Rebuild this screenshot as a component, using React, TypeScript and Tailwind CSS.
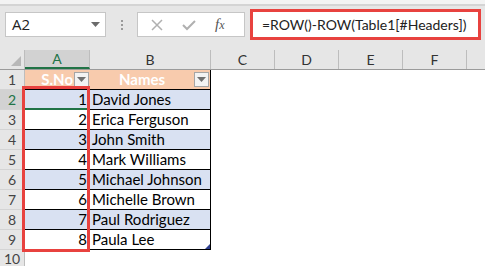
import React from 'react'

const rows = [
  { n: 1, name: 'David Jones' },
  { n: 2, name: 'Erica Ferguson' },
  { n: 3, name: 'John Smith' },
  { n: 4, name: 'Mark Williams' },
  { n: 5, name: 'Michael Johnson' },
  { n: 6, name: 'Michelle Brown' },
  { n: 7, name: 'Paul Rodriguez' },
  { n: 8, name: 'Paula Lee' },
]

const cellFont = { fontFamily: 'Lato, "Liberation Sans", sans-serif' }

function FilterButton() {
  return (
    <div className="w-[15px] h-[15px] border border-[#a6a6a6] bg-[#f3f3f3] flex items-center justify-center shrink-0">
      <svg width="9" height="5" viewBox="0 0 9 5">
        <path d="M0 0 L9 0 L4.5 5 Z" fill="#707070" />
      </svg>
    </div>
  )
}

function ColHeader({ label, w, active }: { label: string; w: string; active?: boolean }) {
  return (
    <div
      className={`${w} h-full flex items-center justify-center border-r border-[#bdbdbd] shrink-0 ${
        active ? 'bg-[#d2d2d2] text-[#217346] border-b-2 border-b-[#217346]' : 'text-[#333]'
      }`}
    >
      <span className="text-[14px]">{label}</span>
    </div>
  )
}

export default function App() {
  return (
    <div className="w-[485px] h-[266px] overflow-hidden bg-[#e6e6e6] relative" style={cellFont}>
      {/* top strip */}
      <div className="h-[4px] bg-[#f3f3f3]" />
      <div className="h-[2px] bg-[#d4d4d4]" />

      {/* formula bar */}
      <div className="h-[37px] flex items-center">
        <div className="ml-[5px] w-[101px] h-[25px] bg-white border border-[#c6c6c6] flex items-center justify-between pl-[6px] pr-[5px]">
          <span className="text-[15px] text-[#222]" style={{ fontFamily: '"Open Sans", sans-serif' }}>
            A2
          </span>
          <svg width="9" height="5" viewBox="0 0 9 5">
            <path d="M0 0 L9 0 L4.5 5 Z" fill="#6b6b6b" />
          </svg>
        </div>
        <div className="w-[31px] flex flex-col items-center gap-[2px]">
          <span className="w-[2px] h-[2px] bg-[#9a9a9a]" />
          <span className="w-[2px] h-[2px] bg-[#9a9a9a]" />
          <span className="w-[2px] h-[2px] bg-[#9a9a9a]" />
        </div>
        <div className="w-[108px] h-[25px] bg-white border border-[#c6c6c6] flex items-center">
          <svg className="ml-[13px]" width="12" height="12" viewBox="0 0 12 12">
            <path d="M1 1 L11 11 M11 1 L1 11" stroke="#b0b0b0" strokeWidth="1.5" />
          </svg>
          <svg className="ml-[19px]" width="14" height="12" viewBox="0 0 14 12">
            <path d="M1 6 L5 10 L13 2" stroke="#b0b0b0" strokeWidth="2" fill="none" />
          </svg>
          <span
            className="ml-[19px] text-[15px] italic text-[#555]"
            style={{ fontFamily: '"Liberation Serif", serif' }}
          >
            f<span className="text-[12px]">x</span>
          </span>
        </div>
        <div className="ml-[5px] w-[231px] h-[31px] bg-white border-[3px] border-[#e8423f] flex items-center pl-[9px] overflow-hidden">
          <span className="text-[14px] text-[#222] whitespace-nowrap" style={{ fontFamily: 'Lato, sans-serif' }}>
            =ROW()-ROW(Table1[#Headers])
          </span>
        </div>
      </div>

      <div className="h-[7px]" />

      {/* column headers */}
      <div className="h-[20px] flex border-b border-[#9b9b9b]">
        <div className="w-[25px] h-full border-r border-[#bdbdbd] relative shrink-0">
          <svg className="absolute right-[3px] bottom-[3px]" width="10" height="10" viewBox="0 0 10 10">
            <path d="M10 0 L10 10 L0 10 Z" fill="#b8b8b8" />
          </svg>
        </div>
        <ColHeader label="A" w="w-[65px]" active />
        <ColHeader label="B" w="w-[121px]" />
        <ColHeader label="C" w="w-[64px]" />
        <ColHeader label="D" w="w-[64px]" />
        <ColHeader label="E" w="w-[64px]" />
        <ColHeader label="F" w="w-[64px]" />
        <div className="flex-1" />
      </div>

      {/* rows */}
      <div className="bg-white">
        {/* header row 1 */}
        <div className="h-[20px] flex">
          <div className="w-[25px] bg-[#e6e6e6] border-r border-[#bdbdbd] border-b border-b-[#d4d4d4] flex items-center justify-center text-[14px] text-[#444] shrink-0">
            1
          </div>
          <div className="w-[65px] bg-[#f8cbad] border-b border-black flex items-center justify-end pr-[1px] gap-[1px] shrink-0">
            <span className="text-white font-bold text-[15px]">S.No</span>
            <FilterButton />
          </div>
          <div className="w-[121px] bg-[#f8cbad] border-r border-black border-b border-b-black flex items-center pr-[1px] shrink-0">
            <span className="flex-1 text-center text-white font-bold text-[15px]">Names</span>
            <FilterButton />
          </div>
          <div className="flex-1" />
        </div>
        {rows.map((r, i) => {
          const banded = i % 2 === 0
          return (
            <div key={r.n} className="h-[20px] flex">
              <div
                className={`w-[25px] border-r border-[#bdbdbd] border-b border-b-[#d4d4d4] flex items-center justify-center text-[14px] shrink-0 ${
                  i === 0 ? 'bg-[#d2d2d2] text-[#217346]' : 'bg-[#e6e6e6] text-[#444]'
                }`}
              >
                {r.n + 1}
              </div>
              <div
                className={`w-[65px] flex items-center justify-end pr-[3px] text-[15px] text-black border-b shrink-0 ${
                  banded ? 'bg-[#d9e1f2]' : 'bg-white'
                } ${i === 0 ? 'border-b-2 border-[#217346]' : 'border-black'}`}
              >
                {r.n}
              </div>
              <div
                className={`w-[121px] flex items-center pl-[2px] text-[15px] text-black border-r border-b border-black shrink-0 relative ${
                  banded ? 'bg-[#d9e1f2]' : 'bg-white'
                }`}
              >
                {r.name}
                {i === rows.length - 1 && (
                  <svg className="absolute right-0 bottom-0" width="5" height="5" viewBox="0 0 5 5">
                    <path d="M5 0 L5 5 L0 5 Z" fill="#2f3f8f" />
                  </svg>
                )}
              </div>
              <div className="flex-1" />
            </div>
          )
        })}
        <div className="h-[20px] flex">
          <div className="w-[25px] bg-[#e6e6e6] border-r border-[#bdbdbd] flex items-start pt-[1px] justify-center text-[14px] leading-[16px] text-[#444] shrink-0">
            10
          </div>
          <div className="flex-1" />
        </div>
      </div>

      {/* red highlight around A2:A9 */}
      <div className="absolute left-[22px] top-[86px] w-[68px] h-[166px] border-[3px] border-[#e8423f] pointer-events-none" />
    </div>
  )
}
